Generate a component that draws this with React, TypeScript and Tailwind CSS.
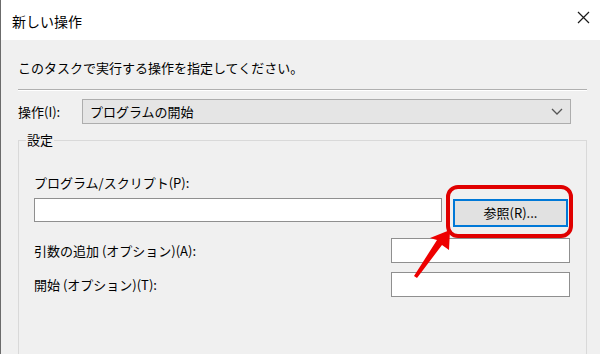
import React from "react";

const font = { fontFamily: '"Noto Sans CJK JP", "Noto Sans", sans-serif' };

export default function App() {
  return (
    <div
      className="relative w-[600px] h-[354px] overflow-hidden bg-[#f0f0f0] border-l border-[#6b6b6b] text-black"
      style={font}
    >
      {/* title bar */}
      <div className="h-[40px] bg-white flex items-start justify-between pl-[11px] pr-[10px]">
        <div className="text-[14px] leading-[20px] mt-[11px]">新しい操作</div>
        <svg width="13" height="13" viewBox="0 0 13 13" className="mt-[11px]">
          <path d="M1 1 L12 12 M12 1 L1 12" stroke="#1a1a1a" strokeWidth="1.2" />
        </svg>
      </div>

      {/* body */}
      <div className="pl-[17px] pr-[13px]">
        <div className="text-[13px] leading-[20px] mt-[18px]">
          このタスクで実行する操作を指定してください。
        </div>
        <div className="mt-[11px] h-[2px] border-t border-[#b0b0b0] border-b border-b-white" />
        <div className="mt-[8px] flex items-center">
          <div className="text-[13px] leading-[20px] w-[64px]">操作(I):</div>
          <div className="w-[489px] h-[25px] bg-[#e5e5e5] border border-[#adadad] flex items-center justify-between pl-[7px] pr-[7px]">
            <span className="text-[13px] leading-[20px]">プログラムの開始</span>
            <svg width="12" height="7" viewBox="0 0 12 7">
              <path d="M1 1 L6 6 L11 1" fill="none" stroke="#555" strokeWidth="1.3" />
            </svg>
          </div>
        </div>

        <fieldset className="mt-[6px] h-[240px] border border-[#d9d9d9] px-0">
          <legend className="ml-[7px] px-[1px] text-[13px] leading-[20px]">設定</legend>
          <div className="pl-[15px] pr-[16px]">
            <div className="mt-[23px] text-[13px] leading-[20px]">プログラム/スクリプト(P):</div>
            <div className="mt-[5px] flex items-start justify-between">
              <div className="w-[408px] h-[24px] bg-white border border-[#8f8f8f]" />
              <div className="mt-[1px] mr-[2px] w-[115px] h-[28px] bg-[#e1e1e1] border-2 border-[#0078d7] flex items-center justify-center text-[13px] leading-[20px]">
                参照(R)...
              </div>
            </div>
            <div className="mt-[11px] flex items-center justify-between">
              <div className="text-[13px] leading-[20px]">引数の追加 (オプション)(A):</div>
              <div className="w-[179px] h-[25px] bg-white border border-[#8f8f8f]" />
            </div>
            <div className="mt-[9px] flex items-center justify-between">
              <div className="text-[13px] leading-[20px]">開始 (オプション)(T):</div>
              <div className="w-[179px] h-[25px] bg-white border border-[#8f8f8f]" />
            </div>
          </div>
        </fieldset>
      </div>

      {/* red annotation */}
      <div className="absolute left-[445px] top-[185px] w-[127px] h-[53px] rounded-[12px] border-[4px] border-[#e00000]" />
      <svg className="absolute left-0 top-0" width="600" height="354" viewBox="0 0 600 354">
        <polygon
          points="449,230 448,250 441,245 416,278 413,276 436,240 429,238"
          fill="#ee0000"
        />
      </svg>
    </div>
  );
}
